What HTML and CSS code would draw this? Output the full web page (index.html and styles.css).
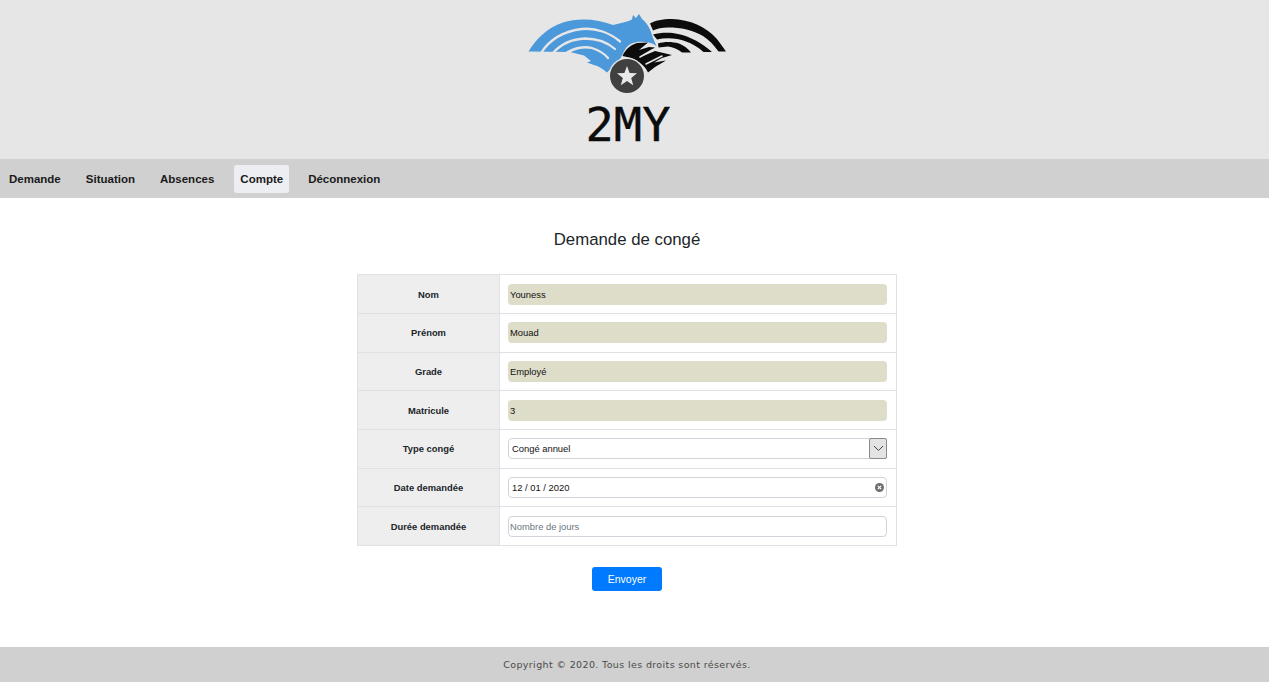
FILE: index.html
```html
<!DOCTYPE html>
<html lang="fr">
<head>
    <meta charset="UTF-8">
    <meta name="viewport" content="width=device-width, initial-scale=1.0">
    <title>Demande de congé</title>
    <link rel="stylesheet" href="styles.css">
</head>
<body>
    <header class="banner">
        <div class="logo">
            <svg class="logo-mark" width="200" height="86" viewBox="528 10 200 86">
                <!-- blue wing -->
                <path fill="#4b98db" d="M528.500 51.500C536 39 547 28 563 22.500C578 17.500 598 19 613 25C620 23 627 22 632 19.500L633 15L636 18L639 14L642 19C647 23 650 28 652 35C653 39 655 42 656.500 46C652 43 649 42 645 42C636 41 630 43 626 48C623 52 622 56 620 59L607 72.500C603 69 598 66 594 65L587 62.500L591 61L584 55.500L570 52Z"/>
                <g fill="none" stroke="#e6e6e6" stroke-width="2.300" stroke-linecap="round">
                    <path d="M541 53C550 39 565 31 582 29C596 27.500 610 33 620 41.500"/>
                    <path d="M553 53C561 44 572 39 585 38.500C598 38.500 608 43 615 49"/>
                    <path d="M565 54C573 48 584 46 592 48C598 50 604 53 608 58"/>
                </g>
                <!-- black wing -->
                <path fill="#0c0c0c" d="M650 23.500C655 20.500 662 19 672 19C690 19.500 706 27 716 38C720 43 723 47 726 51.500L718.500 51.500C714 45 709 40 703 36C693 30 681 27.500 668 27.500C662 27.500 657 28.500 653 30.500Z"/>
                <path fill="#0c0c0c" d="M653 34.500C660 32.500 670 32 678 34C690 36.500 702 43 712 52L703.500 52C698 47 692 43.500 686 41.500C677 38 666 37.500 657 39.500Z"/>
                <path fill="#0c0c0c" d="M658 43.500C664 41.500 672 41.500 679 43.500C684 45.500 688 48.500 691 52.500L682 52.500C678 49 673 47 668 46.500L658.500 47.500Z"/>
                <path fill="#0c0c0c" d="M622.500 56C625 50 630 45 637 43L648 42.500L639 50L649 47L655 47.500L642 56.500L655 51L672 55L662 58L654 62.500L666 60.500L655 67L648 72.500C645 65 635 58 622.500 56Z"/>
                <g fill="none" stroke="#e6e6e6" stroke-width="1.600" stroke-linecap="round">
                    <path d="M640 57L653 49.500"/>
                    <path d="M646 64L662 56"/>
                </g>
                <!-- star badge -->
                <circle cx="627" cy="76" r="18.500" fill="#e6e6e6"/>
                <circle cx="627" cy="76" r="17" fill="#404040"/>
                <path fill="#e9e9e9" d="M627 66L629.600 73L637 73.300L631.200 78L633.200 85.200L627 81.100L620.800 85.200L622.800 78L617 73.300L624.400 73Z"/>
            </svg>
            <div class="logo-name">2MY</div>
        </div>
    </header>

    <nav class="menu">
        <a href="#">Demande</a>
        <a href="#">Situation</a>
        <a href="#">Absences</a>
        <a href="#" class="active">Compte</a>
        <a href="#">Déconnexion</a>
    </nav>

    <main class="content">
        <h2>Demande de congé</h2>
        <form>
            <table class="form-table">
                <tr>
                    <th>Nom</th>
                    <td><input type="text" class="locked" value="Youness" readonly></td>
                </tr>
                <tr>
                    <th>Prénom</th>
                    <td><input type="text" class="locked" value="Mouad" readonly></td>
                </tr>
                <tr>
                    <th>Grade</th>
                    <td><input type="text" class="locked" value="Employé" readonly></td>
                </tr>
                <tr>
                    <th>Matricule</th>
                    <td><input type="text" class="locked" value="3" readonly></td>
                </tr>
                <tr>
                    <th>Type congé</th>
                    <td>
                        <div class="field field-select">
                            <span>Congé annuel</span>
                            <span class="select-arrow">
                                <svg width="11" height="7" viewBox="0 0 11 7"><path d="M1 1l4.500 4.500L10 1" fill="none" stroke="#444" stroke-width="1"/></svg>
                            </span>
                        </div>
                    </td>
                </tr>
                <tr>
                    <th>Date demandée</th>
                    <td>
                        <div class="field field-date">
                            <span>12 / 01 / 2020</span>
                            <svg width="9" height="9" viewBox="0 0 9 9">
                                <circle cx="4.500" cy="4.500" r="4.500" fill="#6e6e6e"/>
                                <path d="M2.800 2.800l3.400 3.400M6.200 2.800L2.800 6.200" stroke="#fff" stroke-width="1.200"/>
                            </svg>
                        </div>
                    </td>
                </tr>
                <tr>
                    <th>Durée demandée</th>
                    <td><input type="text" class="plain" placeholder="Nombre de jours"></td>
                </tr>
            </table>
            <div class="actions">
                <button type="button">Envoyer</button>
            </div>
        </form>
    </main>

    <footer class="footer">Copyright © 2020. Tous les droits sont réservés.</footer>
</body>
</html>
```

FILE: styles.css
```css
/* Global reset */
* {
    margin: 0;
    padding: 0;
    box-sizing: border-box;
}

body {
    font-family: 'Liberation Sans', Arial, sans-serif;
    background: #fff;
    color: #212529;
}

/* Banner with logo */
.banner {
    height: 159px;
    background: #e6e6e6;
    display: flex;
    justify-content: center;
    padding-right: 13px;
}

.logo {
    width: 200px;
    padding-top: 10px;
    display: flex;
    flex-direction: column;
    align-items: center;
}

.logo-mark {
    display: block;
    flex: none;
}

.logo-name {
    font-family: 'DejaVu Sans Mono', monospace;
    font-size: 47px;
    line-height: 58px;
    color: #0c0c0c;
    -webkit-text-stroke: 0.4px #0c0c0c;
}

/* Menu bar */
.menu {
    height: 39px;
    background: #d0d0d0;
    display: flex;
    align-items: center;
    gap: 13px;
}

.menu a {
    padding: 7px 6px;
    border-radius: 3px;
    font-size: 11.5px;
    line-height: 14px;
    font-weight: bold;
    color: #1a1a1a;
    text-decoration: none;
}

.menu a:first-child {
    padding-left: 9px;
}

.menu a.active {
    margin-left: 1px;
    background: #eceef1;
}

/* Form */
.content {
    padding: 32px 15px 0 0;
    height: 449px;
}

h2 {
    font-size: 16.8px;
    line-height: 20px;
    font-weight: normal;
    color: #212529;
    text-align: center;
    margin-bottom: 24.2px;
}

.form-table {
    width: 540px;
    margin: 0 auto;
    border-collapse: collapse;
    table-layout: fixed;
}

.form-table th,
.form-table td {
    border: 1px solid #dee2e6;
    height: 38.7px;
    font-size: 9.4px;
    vertical-align: middle;
}

.form-table th {
    width: 142px;
    background: #eee;
    font-weight: bold;
    color: #212529;
    text-align: center;
}

.form-table td {
    padding: 0 9px 0 8px;
}

input,
.field {
    display: block;
    width: 100%;
    height: 21px;
    font-family: inherit;
    font-size: 9.4px;
    color: #111;
    border-radius: 4px;
    outline: none;
}

.locked {
    background: #deddc9;
    border: 0;
    padding: 0 2px;
}

.plain,
.field {
    background: #fff;
    border: 1px solid #ced4da;
}

.plain {
    padding: 0 1px;
}

.plain::placeholder {
    color: #6c757d;
    opacity: 1;
}

.field {
    display: flex;
    align-items: center;
    justify-content: space-between;
}

.field-select {
    padding-left: 3px;
}

.select-arrow {
    width: 18px;
    height: 21px;
    margin-right: -1px;
    background: #e3e3e3;
    border: 1px solid #8a8a8a;
    border-radius: 2px;
    display: flex;
    align-items: center;
    justify-content: center;
}

.field-date {
    padding: 0 2px 0 3px;
}

.actions {
    display: flex;
    justify-content: center;
    margin-top: 21px;
}

button {
    width: 70px;
    height: 24px;
    background: #007bff;
    color: #fff;
    border: 0;
    border-radius: 3px;
    font-family: inherit;
    font-size: 10.5px;
}

/* Footer */
.footer {
    height: 35px;
    background: #d0d0d0;
    padding-right: 15px;
    display: flex;
    align-items: center;
    justify-content: center;
    font-family: 'DejaVu Sans', sans-serif;
    font-size: 9.5px;
    letter-spacing: 0.37px;
    color: #4a4a4a;
}
```
